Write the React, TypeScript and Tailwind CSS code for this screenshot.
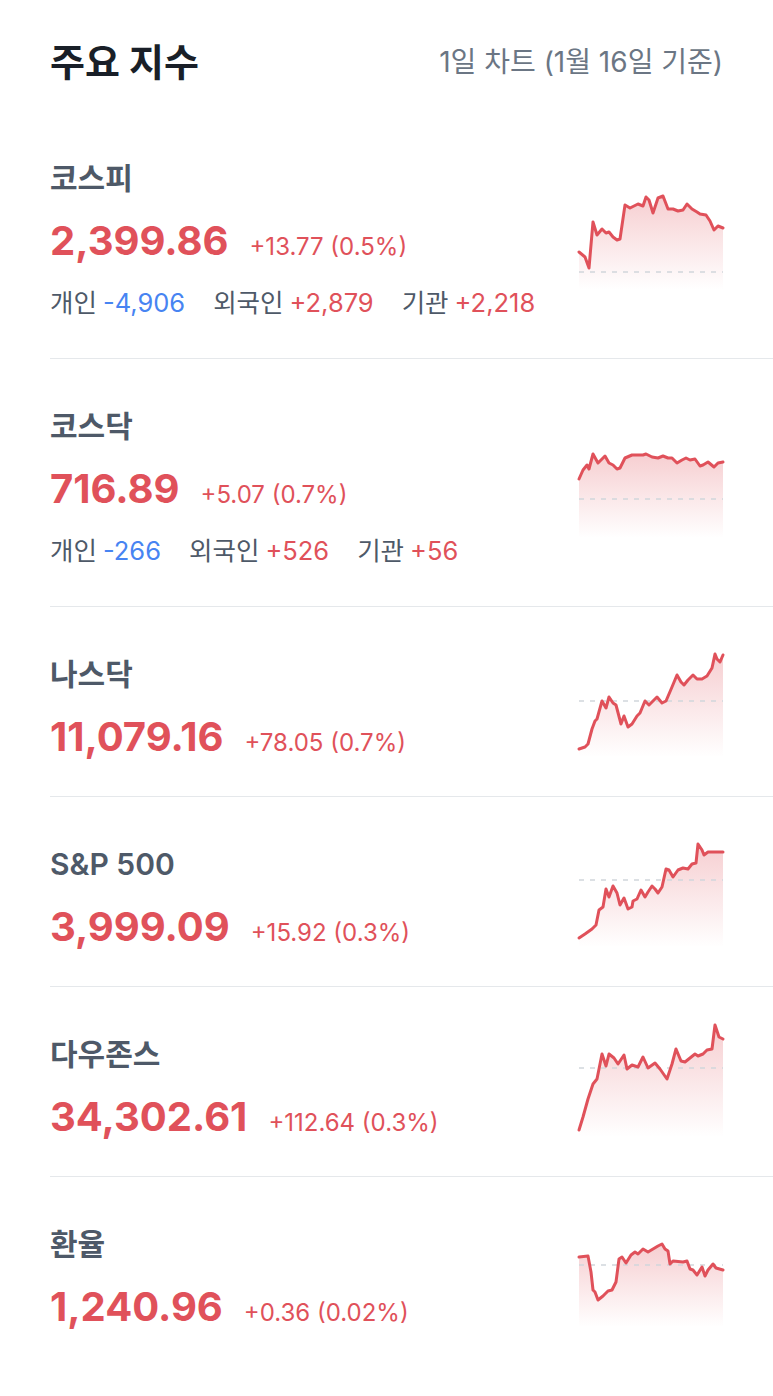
import React from 'react';

type Pt = [number, number];

type Index = {
  name: string;
  price: string;
  change: string;
  investors?: { label: string; value: string; up: boolean }[];
  points: Pt[];
  base: number;
};

const indices: Index[] = [
  {
    name: '코스피',
    price: '2,399.86',
    change: '+13.77 (0.5%)',
    investors: [
      { label: '개인', value: '-4,906', up: false },
      { label: '외국인', value: '+2,879', up: true },
      { label: '기관', value: '+2,218', up: true },
    ],
    base: 92,
    points: [[0,72],[6,77],[10,88],[14,42],[18,55],[23,49],[27,53],[30,52],[34,57],[38,60],[41,59],[46,25],[51,28],[59,24],[64,26],[67,17],[70,20],[74,33],[79,18],[84,16],[89,29],[94,29],[99,31],[104,30],[108,24],[113,29],[118,32],[121,34],[127,35],[131,41],[135,50],[139,46],[144,48]],
  },
  {
    name: '코스닥',
    price: '716.89',
    change: '+5.07 (0.7%)',
    investors: [
      { label: '개인', value: '-266', up: false },
      { label: '외국인', value: '+526', up: true },
      { label: '기관', value: '+56', up: true },
    ],
    base: 71,
    points: [[0,51],[4,42],[8,37],[10,41],[14,26],[19,35],[26,28],[30,35],[34,37],[38,41],[41,40],[46,30],[53,27],[64,27],[67,26],[73,29],[79,30],[84,28],[89,30],[93,30],[98,35],[103,32],[107,30],[111,32],[116,31],[121,38],[124,37],[129,34],[135,39],[139,35],[144,34]],
  },
  {
    name: '나스닥',
    price: '11,079.16',
    change: '+78.05 (0.7%)',
    base: 54,
    points: [[0,102],[6,100],[9,97],[13,82],[16,74],[18,72],[23,54],[27,61],[30,50],[34,56],[37,58],[42,77],[45,69],[49,80],[53,77],[58,69],[61,66],[66,54],[70,58],[74,54],[78,50],[83,56],[87,54],[93,40],[98,28],[102,35],[105,38],[109,33],[114,28],[118,32],[123,32],[128,29],[133,21],[136,7],[138,12],[141,15],[144,8]],
  },
  {
    name: 'S&P 500',
    price: '3,999.09',
    change: '+15.92 (0.3%)',
    base: 43,
    points: [[0,101],[6,97],[13,92],[17,88],[20,73],[24,70],[27,52],[30,60],[34,49],[38,56],[41,68],[45,61],[49,72],[53,70],[54,64],[58,62],[62,53],[66,60],[69,55],[73,49],[76,52],[79,56],[83,50],[87,32],[90,33],[94,40],[99,33],[104,31],[109,32],[113,27],[117,26],[119,7],[123,13],[125,18],[129,15],[144,15]],
  },
  {
    name: '다우존스',
    price: '34,302.61',
    change: '+112.64 (0.3%)',
    base: 41,
    points: [[0,103],[4,90],[9,72],[14,57],[18,52],[23,27],[27,39],[30,27],[35,31],[39,37],[45,28],[48,42],[53,38],[59,40],[64,30],[69,41],[76,36],[81,42],[88,52],[93,37],[97,22],[102,34],[106,35],[111,31],[116,27],[119,29],[124,27],[128,23],[133,22],[136,-2],[140,10],[144,12]],
  },
  {
    name: '환율',
    price: '1,240.96',
    change: '+0.36 (0.02%)',
    base: 48,
    points: [[0,40],[9,39],[12,55],[14,73],[16,75],[19,83],[24,79],[29,74],[33,73],[37,65],[40,42],[43,40],[47,46],[52,38],[56,35],[59,37],[64,32],[69,35],[74,32],[79,29],[83,27],[86,32],[89,34],[91,47],[94,44],[104,45],[108,44],[111,52],[114,53],[118,58],[123,50],[126,59],[129,53],[134,47],[137,51],[144,53]],
  },
];

const RED = '#e0515a';

function Spark({ points, base, id }: { points: Pt[]; base: number; id: string }) {
  const line = points.map(([x, y], i) => `${i ? 'L' : 'M'}${x} ${y}`).join(' ');
  const area = `${line} L144 110 L0 110 Z`;
  return (
    <svg width="144" height="110" viewBox="0 0 144 110" className="overflow-visible shrink-0">
      <defs>
        <linearGradient id={id} x1="0" y1="0" x2="0" y2="1">
          <stop offset="0%" stopColor={RED} stopOpacity="0.28" />
          <stop offset="100%" stopColor={RED} stopOpacity="0" />
        </linearGradient>
      </defs>
      <path d={area} fill={`url(#${id})`} />
      <line x1="0" y1={base} x2="144" y2={base} stroke="#d1d6db" strokeWidth="1.5" strokeDasharray="5 6" />
      <path d={line} fill="none" stroke={RED} strokeWidth="3" strokeLinejoin="round" strokeLinecap="round" />
    </svg>
  );
}

export default function App() {
  return (
    <div
      className="min-h-[1396px] w-full bg-white"
      style={{ fontFamily: 'Inter, "Noto Sans CJK KR", sans-serif' }}
    >
      <div className="flex h-[111px] items-start justify-between px-[50px] pt-[40px]">
        <h1 className="flex h-[44px] items-center text-[38px] font-bold text-[#191f28]">주요 지수</h1>
        <span className="flex h-[44px] items-center text-[28px] text-[#6b7684]">1일 차트 (1월 16일 기준)</span>
      </div>

      <div className="ml-[50px]">
        {indices.map((it, i) => (
          <div
            key={it.name}
            className={`flex items-center justify-between pr-[50px] ${i < indices.length - 1 ? 'border-b border-[#e5e8eb]' : ''}`}
          >
            <div className={`pt-[48px] ${it.investors ? 'pb-[39px]' : 'pb-[35px]'}`}>
              <div className="flex h-[38px] items-center text-[30px] font-semibold text-[#4e5968]">{it.name}</div>
              <div className="mt-[20px] flex h-[48px] items-baseline gap-[21px] text-[#e0515a]">
                <span className="text-[40px] font-bold leading-[48px]">{it.price}</span>
                <span className="text-[24px] leading-[48px]">{it.change}</span>
              </div>
              {it.investors && (
                <div className="mt-[22px] flex h-[32px] items-center gap-[28px] text-[25.5px]">
                  {it.investors.map((v) => (
                    <span key={v.label} className="flex gap-[6px]">
                      <span className="text-[#4e5968]">{v.label}</span>
                      <span className={v.up ? 'text-[#e0515a]' : 'text-[#4784f2]'}>{v.value}</span>
                    </span>
                  ))}
                </div>
              )}
            </div>
            <Spark points={it.points} base={it.base} id={`g${i}`} />
          </div>
        ))}
      </div>
    </div>
  );
}
